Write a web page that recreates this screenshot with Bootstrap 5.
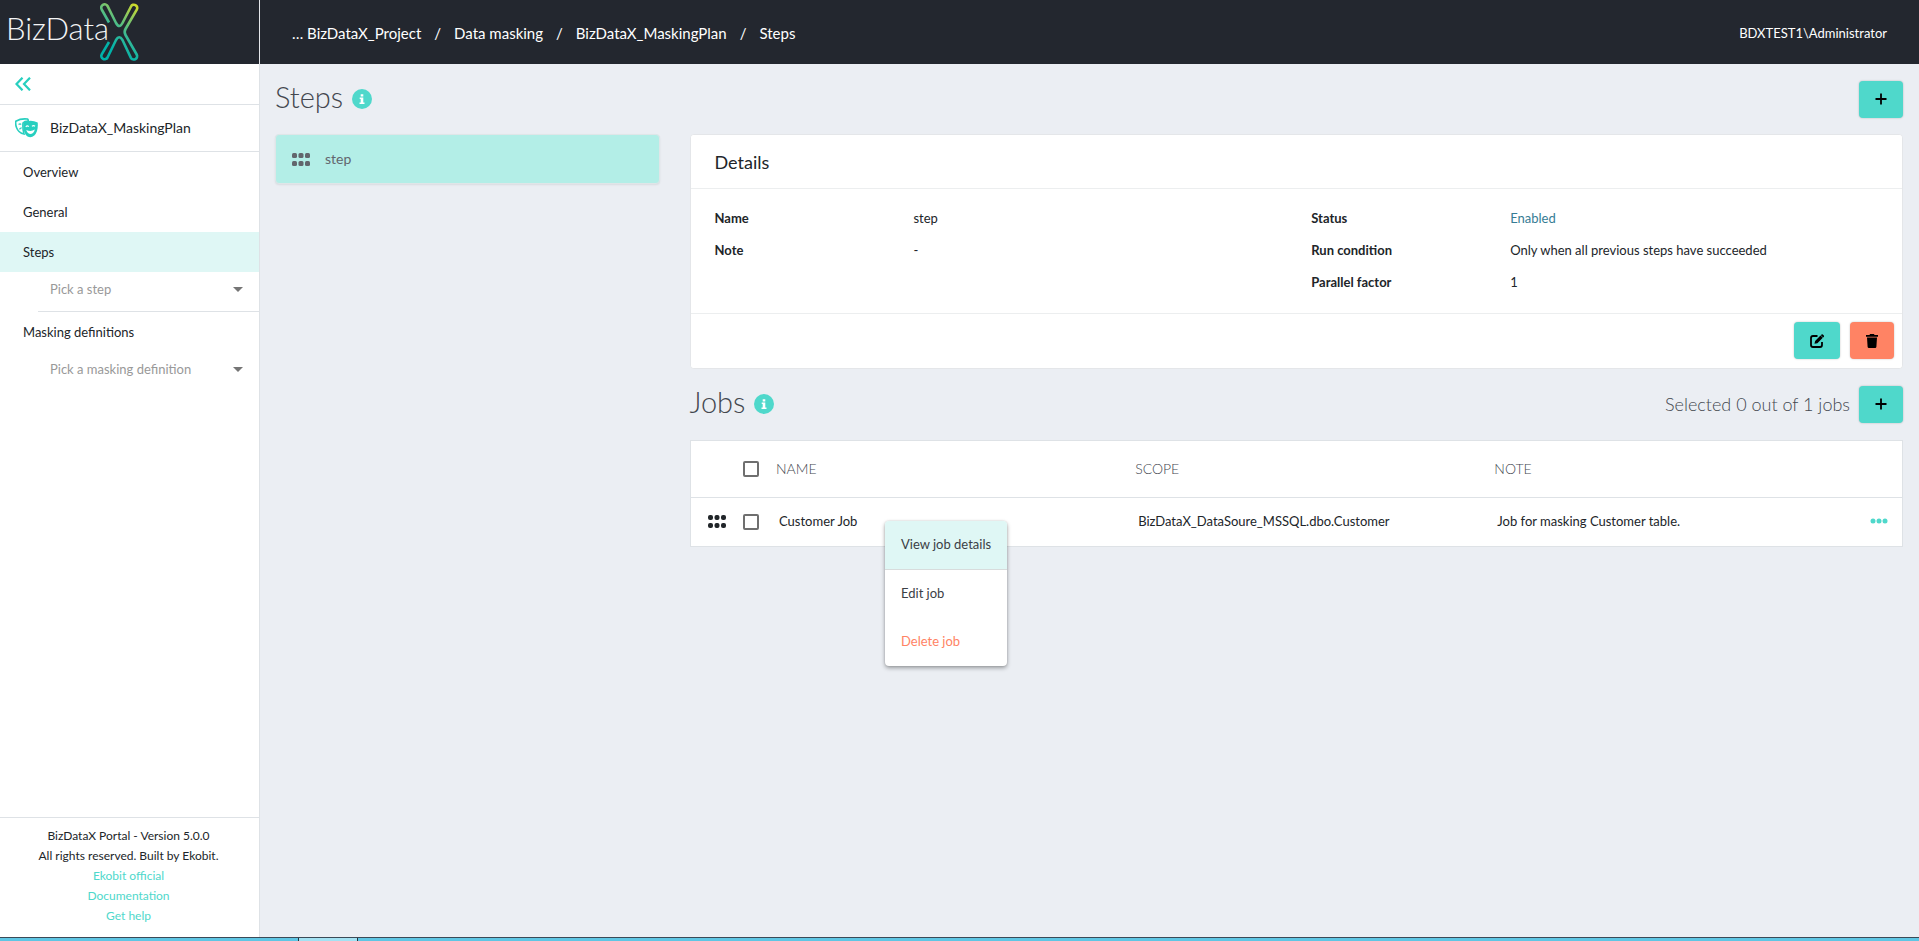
<!DOCTYPE html>
<html lang="en">
<head>
<meta charset="utf-8">
<meta name="viewport" content="width=device-width, initial-scale=1">
<title>BizDataX Portal - Steps</title>
<link href="https://cdn.jsdelivr.net/npm/bootstrap@5.3.0/dist/css/bootstrap.min.css" rel="stylesheet">
<style>
  :root {
    --teal: #4fd8cb;
    --teal-strong: #27cfbf;
    --coral: #ff8364;
    --ink: #212529;
    --dark: #23272f;
    --line: #dee2e6;
  }
  body { font-family: Lato, "Liberation Sans", sans-serif; font-size: 13px; line-height: 20px; color: var(--ink); background: #ebeef3; }
  a { text-decoration: none; }
  .side-w { width: 260px; flex: none; }
  .topbar { background: var(--dark); height: 64px; color: #fff; }
  .topbar .brand-box { border-right: 1px solid #e4e6ea; }
  .topbar nav { padding-top: 2px; }
  .crumbs { font-size: 15px; --bs-breadcrumb-divider-color: #fff; --bs-breadcrumb-item-padding-x: 13px; --bs-breadcrumb-item-active-color: #fff; --bs-breadcrumb-margin-bottom: 0; }
  .crumbs a { color: #fff; }
  .side { background: #fff; border-right: 1px solid var(--line); }
  .side-row { border-bottom: 1px solid var(--line); }
  .collapse-row { height: 41px; padding-left: 15px; }
  .plan-row { height: 47px; padding-left: 15px; gap: 12px; font-size: 14px; }
  .side .nav-link { color: var(--ink); padding: 10px 23px; }
  .side .nav-link.active { background: #dff7f5; }
  .picker { margin-left: 38px; padding: 7px 0 12px; }
  .picker.ruled { border-bottom: 1px solid var(--line); }
  .picker select { border: 0; border-radius: 0; padding: 0 32px 0 12px; font-size: 13px; line-height: 20px; height: 20px; color: #999;
    background: url("data:image/svg+xml,%3Csvg xmlns='http://www.w3.org/2000/svg' viewBox='0 0 10 5'%3E%3Cpath fill='%23757575' d='M0 0h10L5 5z'/%3E%3C/svg%3E") no-repeat right 16px center / 10px 5px; }
  .side-foot { border-top: 1px solid var(--line); padding: 8px 2px 11px 0; font-size: 12px; }
  .side-foot a { color: var(--teal); }
  .work { padding: 16px 16px 0 15px; }
  .page-title { font-size: 29px; line-height: 34px; font-weight: 300; color: #43474f; margin: 0; padding-bottom: 4px; }
  .title-row { height: 38px; gap: 9px; }
  .jobs-title { margin: 16px 0 17px; }
  .split { --bs-gutter-x: 30px; }
  .btn-act { --bs-btn-bg: var(--teal); --bs-btn-hover-bg: var(--teal-strong); --bs-btn-border-color: transparent; --bs-btn-border-radius: 4px; --bs-btn-padding-x: 0; --bs-btn-padding-y: 0;
    width: 44px; height: 37px; border: 0; box-shadow: 0 0 2px rgba(0,0,0,.25); }
  .btn-del { --bs-btn-bg: var(--coral); --bs-btn-hover-bg: #f57050; }
  .btn-edit { width: 46px; }
  .step-tile { background: #b3eee7; border: 1px solid #dfe6e8; border-radius: 4px; height: 50px; padding: 0 16px; gap: 15px; color: #62666d; font-size: 14px; box-shadow: 0 1px 2px rgba(0,0,0,.08); }
  .panel { --bs-card-border-color: #e4e6e9; --bs-card-border-radius: 4px; --bs-card-inner-border-radius: 3px; }
  .panel .card-header { background: #fff; border-color: #eceeef; padding: 16px 24px 15px; font-size: 18px; line-height: 22px; font-weight: 400; }
  .panel .card-body { padding: 19px 24px 21px; }
  .panel .card-footer { background: #fff; border-color: #eceeef; padding: 8px 8px 9px; gap: 10px; }
  .facts { row-gap: 12px; }
  .facts dt { font-weight: 700; }
  .facts dt, .facts dd { margin: 0; }
  .enabled { color: #367c94; }
  .picked { font-size: 18px; line-height: 24px; font-weight: 300; color: #43474f; }
  .jobs { --bs-table-bg: #fff; table-layout: fixed; border: 1px solid var(--line); margin: 0; color: var(--ink); }
  .jobs th, .jobs td { vertical-align: middle; border-bottom: 1px solid var(--line); }
  .jobs th { height: 57px; font-weight: 300; font-size: 14px; color: #43474f; padding: 0; }
  .jobs td { height: 49px; padding: 0 3px 2px; }
  .jobs .c-grip { width: 53px; padding-left: 17px; }
  .jobs .c-tick { width: 33px; padding-left: 0; padding-bottom: 0; }
  .jobs .c-more { width: 49px; text-align: right; padding-right: 14px; }
  .tick { display: block; width: 16px; height: 16px; margin: 0; border: 2px solid #6f6f6f; border-radius: 2px !important; }
  .more-btn { display: block; margin-left: auto; border: 0; background: none; padding: 0; line-height: 0; }
  .job-menu { --bs-dropdown-min-width: 122px; --bs-dropdown-padding-y: 0; --bs-dropdown-border-width: 0; --bs-dropdown-border-radius: 4px; --bs-dropdown-item-padding-x: 16px; --bs-dropdown-item-padding-y: 14px; --bs-dropdown-font-size: 13px;
    top: 23px; left: 109px; width: 122px; overflow: hidden; box-shadow: 0 2px 4px rgba(0,0,0,.35), 0 0 2px rgba(0,0,0,.15); }
  .job-menu .dropdown-item { line-height: 20px; padding-top: 13px; padding-bottom: 15px; color: #3b4045; }
  .job-menu .on { background: #dff7f5; border-bottom: 1px solid #d8dcdc; }
  .job-menu .danger { color: var(--coral); }
  .taskbar { height: 4px; background: #5fc6e4; border-top: 1px solid #3b4a57; padding-left: 298px; }
  .taskbar span { width: 60px; height: 3px; background: #a3e2f3; border: solid #24323d; border-width: 0 1px; }
</style>
</head>
<body>
<div class="d-flex flex-column min-vh-100">

  <header class="topbar d-flex align-items-stretch">
    <a class="side-w brand-box d-block" href="#" aria-label="BizDataX home">
      <svg width="150" height="64" viewBox="0 0 150 64">
        <defs>
          <linearGradient id="xg" gradientUnits="userSpaceOnUse" x1="138" y1="4" x2="108" y2="46">
            <stop offset="0" stop-color="#d8de22"/><stop offset=".3" stop-color="#8cc860"/><stop offset=".65" stop-color="#35b896"/><stop offset="1" stop-color="#00b2a9"/>
          </linearGradient>
        </defs>
        <text x="6" y="40" font-family="Lato, sans-serif" font-weight="300" font-size="31" fill="#f4f5f6">BizData</text>
        <path d="M109 22.500L101.700 9.500a3.300 3.300 0 0 1 5.800-3.500L116 23q3.300 6 6.500 0L131 6.500a3.300 3.300 0 0 1 5.900 3L125.500 29q-1.700 3 0 6L136.700 54.500a3.300 3.300 0 0 1-5.800 3.300L122.500 40q-3.300-5.500-6.500 0L107.500 57.500a3.300 3.300 0 0 1-5.800-3.200L109 42" fill="none" stroke="url(#xg)" stroke-width="2.600"/>
      </svg>
    </a>
    <nav class="flex-grow-1 d-flex align-items-center justify-content-between px-4 ms-2 me-2" aria-label="breadcrumb">
      <ol class="breadcrumb crumbs">
        <li class="breadcrumb-item"><a href="#">… BizDataX_Project</a></li>
        <li class="breadcrumb-item"><a href="#">Data masking</a></li>
        <li class="breadcrumb-item"><a href="#">BizDataX_MaskingPlan</a></li>
        <li class="breadcrumb-item active" aria-current="page">Steps</li>
      </ol>
      <span>BDXTEST1\Administrator</span>
    </nav>
  </header>

  <div class="d-flex flex-grow-1">
    <aside class="side side-w d-flex flex-column">
      <div class="side-row collapse-row d-flex align-items-center">
        <a href="#" aria-label="Collapse menu" class="lh-1">
          <svg width="16" height="14" viewBox="0 0 16 14" fill="none" stroke="#27cfbf" stroke-width="2.200"><path d="M7.500 .7L1.500 7l6 6.300M15 .7L9 7l6 6.300"/></svg>
        </a>
      </div>
      <div class="side-row plan-row d-flex align-items-center">
        <svg width="23" height="20" viewBox="0 0 23 20">
          <path d="M.8 3.200Q6 .2 12.500 1q.8.600.8 2Q9.500 3 8 5q-.5 6 1 11Q3.500 15 1.500 9.500.3 6.500.8 3.200z" fill="#fff" stroke="#27cfbf" stroke-width="1.600"/>
          <path d="M3.600 6.600q1.300-1.200 2.600-.2M4.500 11.400q.8-1.600 2.200-1.600" fill="none" stroke="#27cfbf" stroke-width="1.300"/>
          <path d="M8.500 4.600q7-3.600 14.200 0 .8 8.800-3.400 13-3.300 2.600-6.800.8Q7.400 14.500 8.500 4.600z" fill="#27cfbf"/>
          <path d="M10.800 8.800q1.400-1.600 3-.2M17 8.400q1.400-1.500 3-.1" fill="none" stroke="#fff" stroke-width="1.200"/>
          <path d="M11.300 12q4.500 2.200 8.500-.4-.8 4-4 4.300-3.300 0-4.500-3.900z" fill="#fff"/>
        </svg>
        <span>BizDataX_MaskingPlan</span>
      </div>
      <nav class="nav flex-column">
        <a class="nav-link" href="#">Overview</a>
        <a class="nav-link" href="#">General</a>
        <a class="nav-link active" aria-current="page" href="#">Steps</a>
        <div class="picker ruled"><select class="form-select" aria-label="Pick a step"><option>Pick a step</option></select></div>
        <a class="nav-link" href="#">Masking definitions</a>
        <div class="picker"><select class="form-select" aria-label="Pick a masking definition"><option>Pick a masking definition</option></select></div>
      </nav>
      <div class="side-foot mt-auto text-center">
        <div>BizDataX Portal - Version 5.0.0</div>
        <div>All rights reserved. Built by Ekobit.</div>
        <div><a href="#">Ekobit official</a></div>
        <div><a href="#">Documentation</a></div>
        <div><a href="#">Get help</a></div>
      </div>
    </aside>

    <main class="work flex-grow-1">
      <div class="title-row d-flex align-items-center">
        <h1 class="page-title">Steps</h1>
        <svg width="20" height="20" viewBox="0 0 20 20" role="img" aria-label="About steps"><circle cx="10" cy="10" r="10" fill="#4fd8cb"/><path d="M8.700 5.200h2.600v2.200H8.700zM7.700 8.400h3.600v5h1.200v1.500H7.500v-1.500h1.200V9.900h-1z" fill="#fff"/></svg>
        <button type="button" class="btn btn-act ms-auto" aria-label="Add step"><svg width="12" height="12" viewBox="0 0 12 12" class="d-block mx-auto"><path d="M6 .5v11M.5 6h11" stroke="#000" stroke-width="1.800"/></svg></button>
      </div>

      <div class="row split mt-3">
        <div class="col-3">
          <div class="step-tile d-flex align-items-center">
            <svg width="18" height="13" viewBox="0 0 18 13" fill="currentColor"><rect width="5" height="5" rx="1.500"/><rect x="6.500" width="5" height="5" rx="1.500"/><rect x="13" width="5" height="5" rx="1.500"/><rect y="8" width="5" height="5" rx="1.500"/><rect x="6.500" y="8" width="5" height="5" rx="1.500"/><rect x="13" y="8" width="5" height="5" rx="1.500"/></svg>
            <span>step</span>
          </div>
        </div>

        <div class="col-9">
          <section class="card panel">
            <h2 class="card-header m-0">Details</h2>
            <div class="card-body">
              <div class="row split">
                <div class="col-6">
                  <dl class="row split facts mb-0">
                    <dt class="col-4">Name</dt><dd class="col-8">step</dd>
                    <dt class="col-4">Note</dt><dd class="col-8">-</dd>
                  </dl>
                </div>
                <div class="col-6">
                  <dl class="row split facts mb-0">
                    <dt class="col-4">Status</dt><dd class="col-8 enabled">Enabled</dd>
                    <dt class="col-4">Run condition</dt><dd class="col-8">Only when all previous steps have succeeded</dd>
                    <dt class="col-4">Parallel factor</dt><dd class="col-8">1</dd>
                  </dl>
                </div>
              </div>
            </div>
            <div class="card-footer d-flex justify-content-end">
              <button type="button" class="btn btn-act btn-edit" aria-label="Edit step"><svg width="15" height="14" viewBox="0 0 15 14" class="d-block mx-auto"><path d="M7.500 2H3Q1 2 1 4v7q0 2 2 2h7q2 0 2-2V8" fill="none" stroke="#000" stroke-width="1.800"/><path d="M4.500 9.800l.6-2.900 5.400-5.400 2.300 2.300-5.400 5.400zM11.200.8q.8-.9 1.600-.2l1 1q.6.700-.2 1.500l-.4.400L10.900 1.200z"/></svg></button>
              <button type="button" class="btn btn-act btn-del" aria-label="Delete step"><svg width="12" height="14" viewBox="0 0 12 14" class="d-block mx-auto"><path d="M0 1h3.500L4 0h4l.5 1H12v1.700H0zM1 3.600h10l-.6 9.200q-.1 1.200-1.300 1.200H2.900q-1.200 0-1.300-1.200z"/></svg></button>
            </div>
          </section>

          <div class="title-row jobs-title d-flex align-items-center">
            <h2 class="page-title">Jobs</h2>
            <svg width="20" height="20" viewBox="0 0 20 20" role="img" aria-label="About jobs"><circle cx="10" cy="10" r="10" fill="#4fd8cb"/><path d="M8.700 5.200h2.600v2.200H8.700zM7.700 8.400h3.600v5h1.200v1.500H7.500v-1.500h1.200V9.900h-1z" fill="#fff"/></svg>
            <span class="picked ms-auto">Selected 0 out of 1 jobs</span>
            <button type="button" class="btn btn-act" aria-label="Add job"><svg width="12" height="12" viewBox="0 0 12 12" class="d-block mx-auto"><path d="M6 .5v11M.5 6h11" stroke="#000" stroke-width="1.800"/></svg></button>
          </div>

          <table class="table jobs">
            <thead>
              <tr>
                <th class="c-grip"></th>
                <th class="c-tick"><input class="form-check-input tick" type="checkbox" aria-label="Select all jobs"></th>
                <th>NAME</th><th>SCOPE</th><th>NOTE</th>
                <th class="c-more"></th>
              </tr>
            </thead>
            <tbody>
              <tr>
                <td class="c-grip"><svg class="d-block" width="18" height="13" viewBox="0 0 18 13" fill="currentColor"><rect width="5" height="5" rx="2"/><rect x="6.500" width="5" height="5" rx="2"/><rect x="13" width="5" height="5" rx="2"/><rect y="8" width="5" height="5" rx="2"/><rect x="6.500" y="8" width="5" height="5" rx="2"/><rect x="13" y="8" width="5" height="5" rx="2"/></svg></td>
                <td class="c-tick"><input class="form-check-input tick" type="checkbox" aria-label="Select Customer Job"></td>
                <td class="position-relative">Customer Job
                  <div class="dropdown-menu show job-menu">
                    <button type="button" class="dropdown-item on">View job details</button>
                    <button type="button" class="dropdown-item">Edit job</button>
                    <button type="button" class="dropdown-item danger">Delete job</button>
                  </div>
                </td>
                <td>BizDataX_DataSoure_MSSQL.dbo.Customer</td>
                <td>Job for masking Customer table.</td>
                <td class="c-more"><button type="button" class="more-btn" aria-label="Job actions"><svg width="18" height="6" viewBox="0 0 18 6" fill="#4fd8cb"><circle cx="3" cy="3" r="2.500"/><circle cx="9" cy="3" r="2.500"/><circle cx="15" cy="3" r="2.500"/></svg></button></td>
              </tr>
            </tbody>
          </table>
        </div>
      </div>
    </main>
  </div>

  <div class="taskbar"><span class="d-block"></span></div>
</div>
<script src="https://cdn.jsdelivr.net/npm/bootstrap@5.3.0/dist/js/bootstrap.bundle.min.js"></script>
</body>
</html>
